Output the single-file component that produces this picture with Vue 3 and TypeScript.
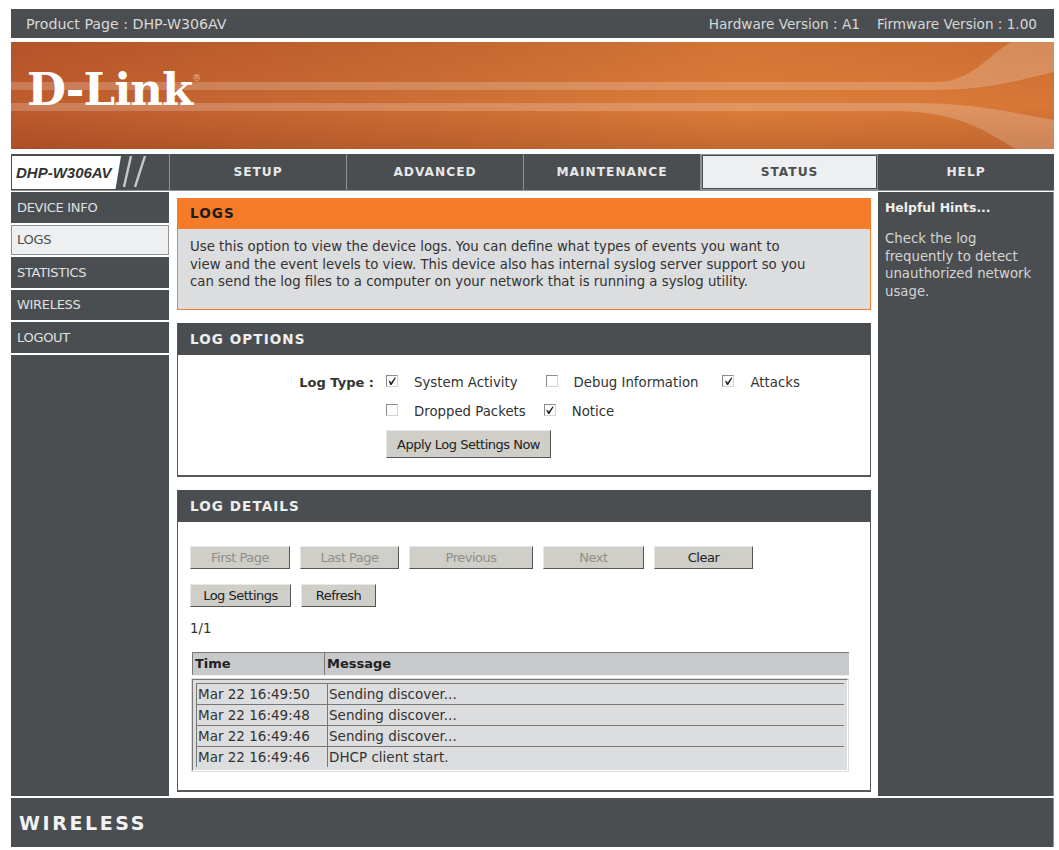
<script setup lang="ts">
const tabs = ['SETUP', 'ADVANCED', 'MAINTENANCE', 'STATUS']
const menu = ['DEVICE INFO', 'LOGS', 'STATISTICS', 'WIRELESS', 'LOGOUT']
const introLines = [
  'Use this option to view the device logs. You can define what types of events you want to',
  'view and the event levels to view. This device also has internal syslog server support so you',
  'can send the log files to a computer on your network that is running a syslog utility.'
]
const rows = [
  { time: 'Mar 22 16:49:50', msg: 'Sending discover...' },
  { time: 'Mar 22 16:49:48', msg: 'Sending discover...' },
  { time: 'Mar 22 16:49:46', msg: 'Sending discover...' },
  { time: 'Mar 22 16:49:46', msg: 'DHCP client start.' }
]
const pageButtons = [
  { label: 'First Page', width: 100, off: true },
  { label: 'Last Page', width: 99, off: true },
  { label: 'Previous', width: 124, off: true },
  { label: 'Next', width: 101, off: true },
  { label: 'Clear', width: 99, off: false }
]
</script>

<template>
  <div class="page">
    <div class="topbar">
      <span class="product">Product Page : DHP-W306AV</span>
      <span class="versions"><span>Hardware Version : A1</span><span>Firmware Version : 1.00</span></span>
    </div>

    <div class="banner">
      <svg class="stripes" viewBox="0 0 1043 107" preserveAspectRatio="none">
        <path d="M0 40H925C960 40 975 15 1000 0H1043V30C1000 40 975 48 920 48H0Z" fill="#fff" opacity=".2" />
        <path d="M0 61H900C960 61 1000 70 1043 78V107H1005C975 90 950 69 880 69H0Z" fill="#fff" opacity=".2" />
      </svg>
      <div class="logo">D-Link<sup>®</sup></div>
    </div>

    <div class="nav">
      <div class="model">
        <span class="model-name">DHP-W306AV</span>
        <svg class="slashes" width="34" height="31" viewBox="0 0 34 31">
          <path d="M3 31L10 0M14 31L24 0" stroke="#c8c8c8" stroke-width="2.4" fill="none" />
        </svg>
      </div>
      <div v-for="t in tabs" :key="t" class="tab" :class="{ active: t === 'STATUS' }">{{ t }}</div>
      <div class="tab help">HELP</div>
    </div>

    <div class="middle">
      <div class="side">
        <div v-for="m in menu" :key="m" class="side-item" :class="{ active: m === 'LOGS' }">{{ m }}</div>
        <div class="side-rest"></div>
      </div>

      <div class="content">
        <div class="intro">
          <h2 class="intro-title">LOGS</h2>
          <div class="intro-text">
            <p v-for="line in introLines" :key="line">{{ line }}</p>
          </div>
        </div>

        <div class="box options">
          <h2 class="box-title">LOG OPTIONS</h2>
          <div class="options-body">
            <div class="log-label">Log Type :</div>
            <div class="log-fields">
              <div class="check-row">
                <label class="check sys"><input type="checkbox" checked />System Activity</label>
                <label class="check dbg"><input type="checkbox" />Debug Information</label>
                <label class="check"><input type="checkbox" checked />Attacks</label>
              </div>
              <div class="check-row">
                <label class="check drop"><input type="checkbox" />Dropped Packets</label>
                <label class="check"><input type="checkbox" checked />Notice</label>
              </div>
              <button class="btn apply">Apply Log Settings Now</button>
            </div>
          </div>
        </div>

        <div class="box details">
          <h2 class="box-title">LOG DETAILS</h2>
          <div class="details-body">
            <div class="btn-row">
              <button v-for="b in pageButtons" :key="b.label" class="btn" :class="{ off: b.off }" :style="{ width: b.width + 'px' }">{{ b.label }}</button>
            </div>
            <div class="btn-row second">
              <button class="btn settings">Log Settings</button>
              <button class="btn refresh">Refresh</button>
            </div>
            <div class="pager">1/1</div>
            <div class="log-head">
              <div class="head-time">Time</div>
              <div class="head-msg">Message</div>
            </div>
            <div class="log-table">
              <div v-for="(r, i) in rows" :key="i" class="log-row">
                <div class="cell-time">{{ r.time }}</div>
                <div class="cell-msg">{{ r.msg }}</div>
              </div>
            </div>
          </div>
        </div>
      </div>

      <div class="hints">
        <h3>Helpful Hints...</h3>
        <p>Check the log frequently to detect unauthorized network usage.</p>
      </div>
    </div>

    <div class="footer"><span class="wireless">WIRELESS</span></div>
  </div>
</template>

<style scoped>
.page {
  width: 1043px;
  height: 838px;
  margin: 9px 0 0 11px;
  display: flex;
  flex-direction: column;
  font-family: "DejaVu Sans", Verdana, sans-serif;
  font-size: 13.3px;
  color: #333;
}

.topbar {
  height: 29px;
  flex: none;
  background: #4a4e50;
  color: #d8d8d8;
  display: flex;
  justify-content: space-between;
  align-items: center;
  padding: 0 17px 0 15px;
  font-size: 13.6px;
}

.product {
  font-size: 14.2px;
}

.versions {
  display: flex;
  gap: 17px;
}

.banner {
  position: relative;
  height: 107px;
  flex: none;
  margin-top: 4px;
  background:
    linear-gradient(180deg, rgba(120, 50, 20, .08) 0%, rgba(255, 170, 90, .08) 60%, rgba(120, 50, 20, .22) 100%),
    linear-gradient(90deg, #b9562a 0%, #c96a32 40%, #d97a38 70%, #d37335 100%);
  overflow: hidden;
}

.stripes {
  position: absolute;
  inset: 0;
  width: 100%;
  height: 100%;
}

.logo {
  position: absolute;
  left: 16px;
  top: 20px;
  font-family: "DejaVu Serif", "Liberation Serif", serif;
  font-weight: 700;
  font-size: 45px;
  line-height: 56px;
  color: #fff;
  letter-spacing: -1px;
}

.logo sup {
  font-size: 9px;
  line-height: 0;
  vertical-align: 24px;
  font-weight: 400;
  opacity: .5;
}

.nav {
  height: 36px;
  flex: none;
  margin-top: 5px;
  display: flex;
  border-bottom: 1px solid #8e9193;
  background: #4a4e50;
}

.model {
  width: 159px;
  flex: none;
  display: flex;
  align-items: stretch;
  border-right: 1px solid #8e9193;
  padding: 2px 0 1px 1px;
  box-sizing: border-box;
}

.model-name {
  width: 109px;
  padding-left: 4px;
  box-sizing: border-box;
  background: #fff;
  color: #333;
  font-family: "Liberation Sans", Arial, sans-serif;
  font-weight: 700;
  font-style: italic;
  font-size: 15px;
  display: flex;
  align-items: center;
  clip-path: polygon(0 0, 100% 0, 95% 100%, 0 100%);
}

.tab {
  width: 177px;
  flex: none;
  border-right: 1px solid #8e9193;
  box-sizing: border-box;
  color: #e8e8e8;
  font-weight: 700;
  font-size: 12.2px;
  letter-spacing: 1px;
  display: flex;
  align-items: center;
  justify-content: center;
}

.tab.active {
  background: #edeff1;
  color: #4a4e50;
  border: 1px solid #8e9193;
  box-shadow: inset 0 0 0 1px #4a4e50;
}

.tab.help {
  flex: 1;
  width: auto;
  border-right: 0;
}

.middle {
  flex: 1;
  min-height: 0;
  display: flex;
  margin-top: 1px;
}

.side {
  width: 158px;
  flex: none;
  display: flex;
  flex-direction: column;
  gap: 2px;
}

.side-item {
  height: 30.5px;
  flex: none;
  background: #4a4e50;
  color: #e0e0e0;
  padding-left: 6px;
  display: flex;
  align-items: center;
  font-size: 13px;
  letter-spacing: -.3px;
}

.side-item.active {
  background: #edeff1;
  color: #4a4e50;
  border: 1px solid #8e9193;
  padding-left: 5px;
  box-sizing: border-box;
}

.side-rest {
  flex: 1;
  background: #4a4e50;
}

.content {
  width: 694px;
  flex: none;
  margin-left: 8px;
  padding-top: 6px;
  box-sizing: border-box;
  display: flex;
  flex-direction: column;
  gap: 13px;
}

.intro {
  height: 112px;
  flex: none;
  background: #dcddde;
  border: 1px solid #f57d2c;
  border-top: 0;
  box-sizing: border-box;
}

.intro-title {
  margin: 0;
  height: 31px;
  padding-left: 12px;
  background: #f57b29;
  color: #1c1c1c;
  font-size: 13.5px;
  letter-spacing: 1.1px;
  line-height: 31px;
}

.intro-text {
  padding: 9px 12px 0;
  line-height: 17.5px;
  white-space: nowrap;
}

.intro-text p {
  margin: 0;
}

.box {
  background: #fff;
  border: 1px solid #55595b;
  border-top: 0;
  border-bottom-width: 2px;
  box-sizing: border-box;
  flex: none;
}

.box-title {
  margin: 0;
  height: 32px;
  background: #4a4e50;
  color: #eee;
  font-size: 13.5px;
  letter-spacing: 1.1px;
  line-height: 32px;
  padding-left: 12px;
}

.options {
  height: 154px;
}

.options-body {
  display: flex;
  padding-top: 14px;
}

.log-label {
  width: 196px;
  text-align: right;
  font-weight: 700;
  line-height: 28px;
  font-size: 13px;
}

.log-fields {
  margin-left: 12px;
}

.check-row {
  display: flex;
  height: 29px;
}

.check {
  display: flex;
  align-items: flex-start;
  line-height: 28px;
  white-space: nowrap;
}

.check.sys {
  margin-right: 28px;
}

.check.dbg {
  margin-right: 24px;
}

.check.drop {
  margin-right: 18px;
}

.check input {
  appearance: none;
  width: 12px;
  height: 12px;
  margin: 6px 16px 0 0;
  background: #fdfdfd;
  border: 1px solid #8a8a8a;
  border-right-color: #d4d4d4;
  border-bottom-color: #d4d4d4;
  position: relative;
  flex: none;
}

.check input:checked::before {
  content: '';
  position: absolute;
  inset: 1px;
  background: #222;
  clip-path: polygon(5% 45%, 30% 55%, 40% 70%, 85% 5%, 100% 10%, 45% 100%, 30% 100%);
}

.btn {
  font-family: "DejaVu Sans", Verdana, sans-serif;
  font-size: 13px;
  letter-spacing: -.5px;
  height: 23px;
  padding: 0;
  background: #cfcec8;
  color: #222;
  border: 1px solid;
  border-color: #e8e8e4 #555 #555 #e8e8e4;
  box-sizing: border-box;
}

.btn.off {
  color: #8f8f8b;
}

.apply {
  display: block;
  margin-top: 3px;
  width: 165px;
  height: 28px;
}

.details {
  height: 302px;
}

.details-body {
  padding: 24px 12px 0;
}

.btn-row {
  display: flex;
  gap: 10px;
}

.btn-row.second {
  margin-top: 15px;
}

.settings {
  width: 101px;
}

.refresh {
  width: 75px;
}

.pager {
  margin-top: 14px;
  line-height: 16px;
}

.log-head {
  margin-top: 15px;
  margin-left: 2px;
  width: 657px;
  height: 24px;
  background: #c8c9cb;
  border-top: 1px solid #777;
  border-bottom: 1px solid #eee;
  box-sizing: border-box;
  display: flex;
  font-weight: 700;
  font-size: 13px;
  line-height: 22px;
  color: #222;
}

.head-time {
  width: 132px;
  border-left: 1px solid #777;
  padding-left: 2px;
  box-sizing: border-box;
}

.head-msg {
  flex: 1;
  border-left: 1px solid #777;
  padding-left: 2px;
}

.log-table {
  margin-top: 3px;
  margin-left: 2px;
  width: 656px;
  height: 92px;
  padding: 3px 3px 0;
  background: #dcddde;
  border: 1px solid #fff;
  border-top-color: #777;
  border-left-color: #777;
  outline: 1px solid #dcddde;
  box-sizing: border-box;
}

.log-row {
  height: 21px;
  display: flex;
  line-height: 20px;
  font-size: 13.5px;
  border-top: 1px solid #777;
  box-sizing: border-box;
}

.cell-time {
  width: 131px;
  border-left: 1px solid #777;
  padding-left: 1px;
  box-sizing: border-box;
  flex: none;
}

.cell-msg {
  border-left: 1px solid #777;
  padding-left: 1px;
}

.hints {
  flex: 1;
  margin-left: 7px;
  background: #4a4e50;
  color: #d4d4d4;
  padding: 7px 9px 0 7px;
  border-right: 1px solid #8e9193;
}

.hints h3 {
  margin: 0;
  color: #eee;
  font-size: 12.4px;
  line-height: 18px;
}

.hints p {
  margin: 13px 0 0;
  line-height: 17.5px;
}

.footer {
  height: 49px;
  flex: none;
  margin-top: 2px;
  background: #4a4e50;
  border-right: 1px solid #8e9193;
  display: flex;
  align-items: center;
  padding-left: 8px;
}

.wireless {
  color: #f2f2f2;
  font-weight: 700;
  font-size: 19px;
  letter-spacing: 2.6px;
}
</style>

<style>
html, body {
  background: #fff;
}
</style>
